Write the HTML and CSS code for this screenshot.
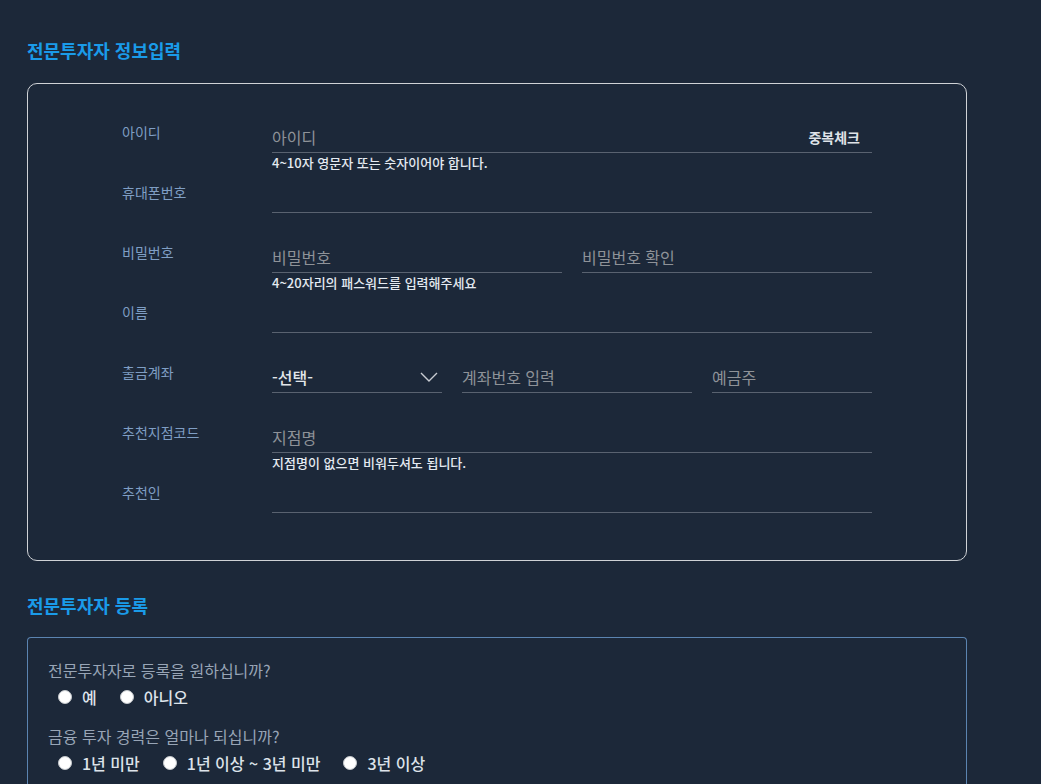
FILE: index.html
```html
<!DOCTYPE html>
<html lang="ko">
<head>
<meta charset="utf-8">
<title>전문투자자 정보입력</title>
<link rel="stylesheet" href="styles.css">
</head>
<body>
<div class="page">
  <h2 class="section-title">전문투자자 정보입력</h2>
  <div class="panel info">
    <div class="row">
      <div class="label">아이디</div>
      <div class="field">
        <div class="line">
          <div class="input grow"><span class="ph">아이디</span><span class="btn">중복체크</span></div>
        </div>
        <div class="help">4~10자 영문자 또는 숫자이어야 합니다.</div>
      </div>
    </div>
    <div class="row">
      <div class="label">휴대폰번호</div>
      <div class="field"><div class="line"><div class="input grow"></div></div></div>
    </div>
    <div class="row">
      <div class="label">비밀번호</div>
      <div class="field">
        <div class="line">
          <div class="input grow"><span class="ph">비밀번호</span></div>
          <div class="input grow"><span class="ph">비밀번호 확인</span></div>
        </div>
        <div class="help">4~20자리의 패스워드를 입력해주세요</div>
      </div>
    </div>
    <div class="row">
      <div class="label">이름</div>
      <div class="field"><div class="line"><div class="input grow"></div></div></div>
    </div>
    <div class="row">
      <div class="label">출금계좌</div>
      <div class="field">
        <div class="line">
          <div class="input select"><span class="val">-선택-</span>
            <svg class="chev" width="18" height="10" viewBox="0 0 18 10"><path d="M1 1 L9 9 L17 1" fill="none" stroke="#c8ccd2" stroke-width="1.4"/></svg>
          </div>
          <div class="input acct"><span class="ph">계좌번호 입력</span></div>
          <div class="input owner"><span class="ph">예금주</span></div>
        </div>
      </div>
    </div>
    <div class="row">
      <div class="label">추천지점코드</div>
      <div class="field">
        <div class="line"><div class="input grow"><span class="ph">지점명</span></div></div>
        <div class="help">지점명이 없으면 비워두셔도 됩니다.</div>
      </div>
    </div>
    <div class="row">
      <div class="label">추천인</div>
      <div class="field"><div class="line"><div class="input grow"></div></div></div>
    </div>
  </div>

  <h2 class="section-title second">전문투자자 등록</h2>
  <div class="panel reg">
    <div class="question">전문투자자로 등록을 원하십니까?</div>
    <div class="radios">
      <label class="radio"><span class="dot"></span>예</label>
      <label class="radio"><span class="dot"></span>아니오</label>
    </div>
    <div class="question q2">금융 투자 경력은 얼마나 되십니까?</div>
    <div class="radios">
      <label class="radio"><span class="dot"></span>1년 미만</label>
      <label class="radio"><span class="dot"></span>1년 이상 ~ 3년 미만</label>
      <label class="radio"><span class="dot"></span>3년 이상</label>
    </div>
  </div>
</div>
</body>
</html>
```

FILE: styles.css
```css
html, body {
  margin: 0;
  padding: 0;
  background: #1c2839;
  height: 100%;
  overflow: hidden;
}
body {
  font-family: "Noto Sans CJK KR", "Noto Sans", sans-serif;
  color: #dfe5ec;
}
.page {
  padding: 38px 0 0 27px;
  width: 940px;
}
.section-title {
  margin: 0 0 21px 0;
  font-size: 18px;
  line-height: 24px;
  font-weight: 700;
  color: #1a9be9;
}
.section-title.second {
  margin-top: 32px;
  margin-bottom: 20px;
}
.panel.info {
  border: 1px solid #cfd2d6;
  border-radius: 10px;
  padding: 38px 94px 18px 94px;
}
.row {
  display: flex;
  height: 60px;
}
.label {
  width: 150px;
  flex: none;
  font-size: 14px;
  line-height: 20px;
  color: #7f9ec4;
}
.field {
  width: 600px;
}
.line {
  display: flex;
  gap: 20px;
}
.input {
  height: 30px;
  border-bottom: 1px solid #596270;
  display: flex;
  align-items: center;
  justify-content: space-between;
  font-size: 16px;
}
.grow { flex: 1; }
.select { width: 170px; flex: none; }
.acct { width: 230px; flex: none; }
.owner { width: 160px; flex: none; }
.ph {
  color: #8e9298;
}
.val {
  color: #e2e6ea;
  font-weight: 500;
}
.chev {
  margin-right: 4px;
}
.btn {
  font-size: 14px;
  font-weight: 700;
  color: #dfe3e8;
  margin-right: 12px;
}
.help {
  font-size: 13px;
  line-height: 20px;
  font-weight: 500;
  color: #e4eaf1;
}
.panel.reg {
  border: 1px solid #5b84b1;
  border-bottom: none;
  border-radius: 4px 4px 0 0;
  padding: 21px 20px 40px 20px;
}
.question {
  font-size: 16px;
  line-height: 22px;
  color: #98a5b6;
}
.question.q2 {
  margin-top: 17px;
}
.radios {
  display: flex;
  margin-top: 5px;
  padding-left: 10px;
}
.radio {
  display: flex;
  align-items: center;
  font-size: 16px;
  line-height: 22px;
  font-weight: 500;
  color: #dde3ea;
  margin-right: 23px;
}
.dot {
  width: 12px;
  height: 12px;
  border-radius: 50%;
  background: #ffffff;
  border: 1px solid #c4c8cc;
  box-sizing: content-box;
  margin-right: 10px;
}
```
